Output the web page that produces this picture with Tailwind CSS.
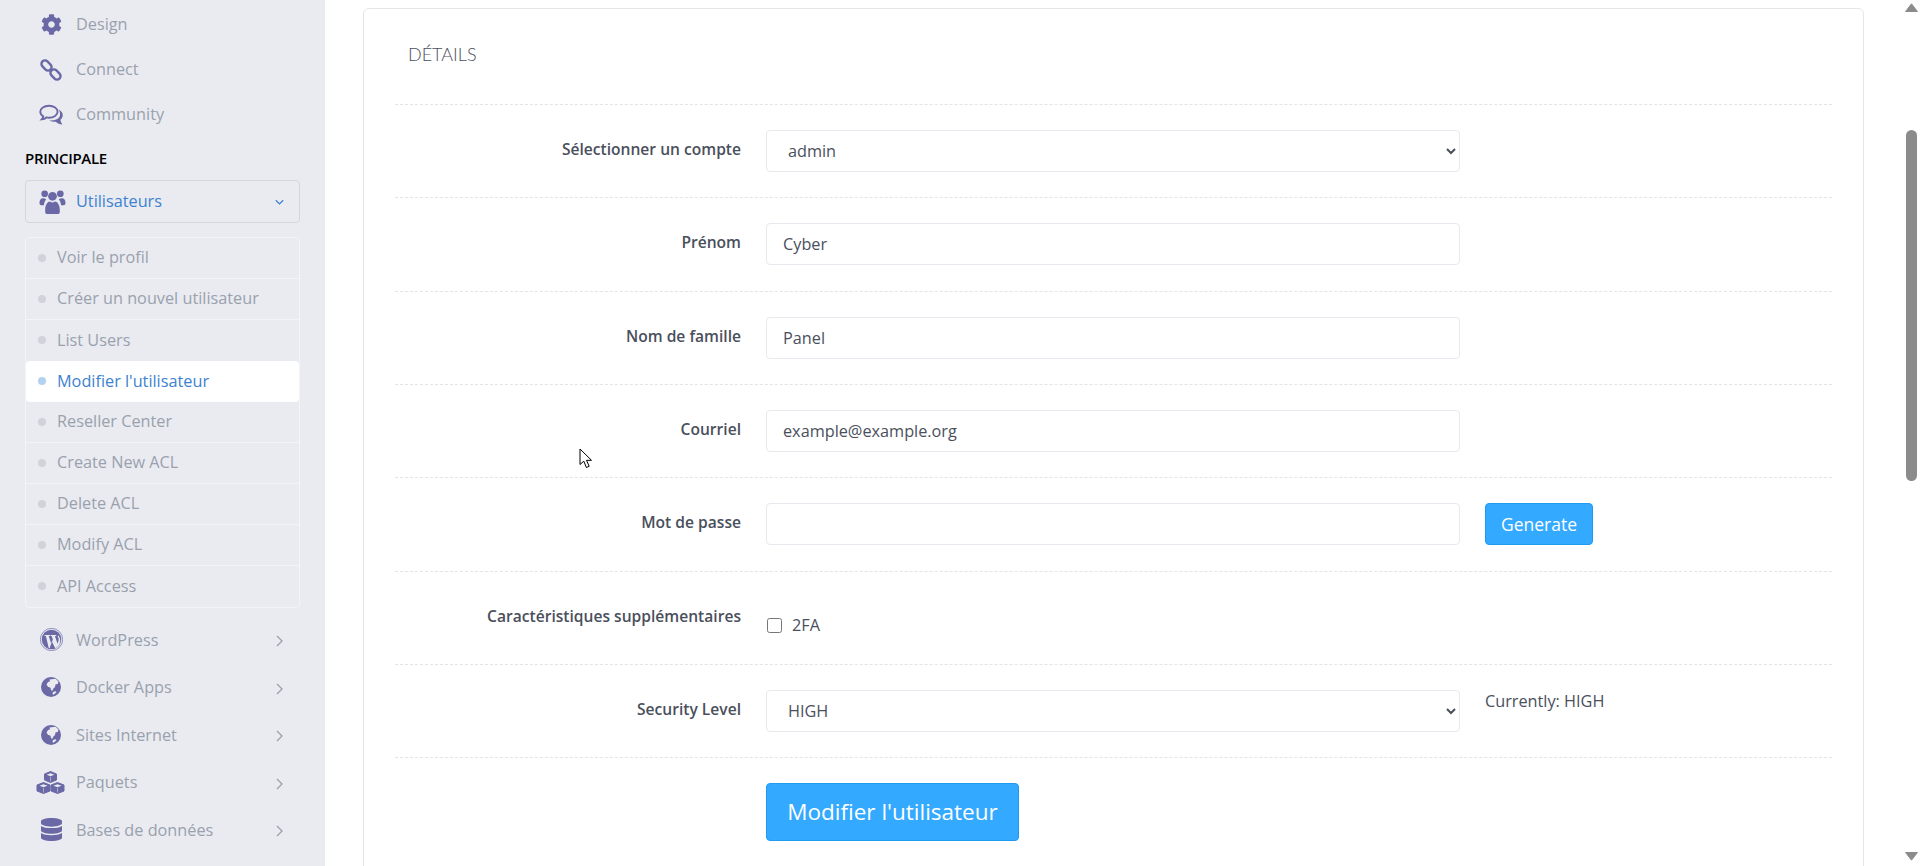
<!DOCTYPE html>
<html lang="fr">
<head>
<meta charset="utf-8">
<title>Modifier l'utilisateur</title>
<script src="https://cdn.jsdelivr.net/npm/@tailwindcss/browser@4"></script>
</head>
<body class="relative flex h-[866px] w-[1920px] overflow-hidden bg-white font-['Open_Sans',sans-serif] text-[#4a4f5c]">

<aside class="h-full w-[325px] shrink-0 overflow-hidden bg-[#e9ebf1] pt-[2px] text-[16.25px] text-[#9aa1ad]">
  <a class="flex h-[45px] items-center">
    <span class="flex w-[76px] justify-center pl-[26px]"><svg class="h-[21px] w-[21px] fill-[#6b68a6]" viewBox="0 0 512 512"><path d="M487.4 315.7l-42.6-24.6c4.3-23.2 4.3-47 0-70.2l42.6-24.6c4.9-2.8 7.1-8.6 5.5-14-11.1-35.6-30-67.8-54.7-94.6-3.8-4.1-10-5.1-14.8-2.3L380.8 110c-17.9-15.4-38.5-27.3-60.8-35.1V25.8c0-5.6-3.9-10.5-9.4-11.7-36.7-8.2-74.3-7.8-109.2 0-5.5 1.2-9.4 6.1-9.4 11.7V75c-22.2 7.9-42.8 19.8-60.8 35.1L88.7 85.5c-4.9-2.8-11-1.9-14.8 2.3-24.7 26.7-43.6 58.9-54.7 94.6-1.7 5.4.6 11.2 5.5 14L67.3 221c-4.3 23.2-4.3 47 0 70.2l-42.6 24.6c-4.9 2.8-7.1 8.6-5.5 14 11.1 35.6 30 67.8 54.7 94.6 3.8 4.1 10 5.1 14.8 2.3l42.6-24.6c17.9 15.4 38.5 27.3 60.8 35.1v49.2c0 5.6 3.9 10.5 9.4 11.7 36.7 8.2 74.3 7.8 109.2 0 5.5-1.2 9.4-6.1 9.4-11.7v-49.2c22.2-7.9 42.8-19.8 60.8-35.1l42.6 24.6c4.9 2.8 11 1.9 14.8-2.3 24.7-26.7 43.6-58.9 54.7-94.6 1.5-5.5-.7-11.3-5.6-14.1zM256 336c-44.1 0-80-35.9-80-80s35.9-80 80-80 80 35.9 80 80-35.9 80-80 80z"/></svg></span>
    <span>Design</span>
  </a>
  <a class="flex h-[45px] items-center">
    <span class="flex w-[76px] justify-center pl-[26px]"><svg class="h-[22px] w-[22px] fill-none stroke-[#6b68a6] stroke-[2.4]" viewBox="0 0 22 22"><rect x="0.8" y="3" width="11.400" height="7" rx="3.500" transform="rotate(45 6.500 6.500)"/><rect x="9.800" y="12" width="11.400" height="7" rx="3.500" transform="rotate(45 15.500 15.500)"/></svg></span>
    <span>Connect</span>
  </a>
  <a class="flex h-[45px] items-center">
    <span class="flex w-[76px] justify-center pl-[26px]"><svg class="h-[21px] w-[24px]" viewBox="0 0 24 21"><path class="fill-[#6b68a6]" d="M19.500 5.500c3 1.500 4.500 3.600 4.200 6.200-.2 1.600-1 2.900-2.300 4 .2 1.600.9 3.200 2 4.800-2.600-.2-4.800-1-6.500-2.800-2.400.3-4.700-.1-6.600-1.200 5 .3 8.600-1 10.300-3.800.9-2.300.6-4.900-1.100-7.200z"/><path class="fill-none stroke-[#6b68a6] stroke-[1.900]" d="M10 1.700c-4.900 0-8.700 2.700-8.700 6 0 1.900 1.200 3.600 3 4.700-.2 1.100-.7 2.100-1.500 3 1.800-.2 3.400-.9 4.700-2 .8.200 1.600.3 2.500.3 4.800 0 8.600-2.700 8.600-6s-3.800-6-8.600-6z"/></svg></span>
    <span>Community</span>
  </a>

  <div class="flex h-[43px] items-center pl-[25px] text-[15px] font-semibold tracking-[-0.3px] text-black">PRINCIPALE</div>

  <a class="mx-[25px] flex h-[43px] items-center rounded border border-[#d3d6de] text-[#3c82d0]">
    <span class="flex w-[50px] justify-center pl-[2px]"><svg class="h-[24px] w-[27px] fill-[#6b68a6]" viewBox="0 0 25 23"><circle cx="12.500" cy="6" r="4.200"/><circle cx="5" cy="3.600" r="3.200"/><circle cx="20" cy="3.600" r="3.200"/><path d="M0 12.500c0-3 1.500-4.500 3.200-4.500 1.700 0 2.500.5 3.300 1-1.200 1.200-2 3-2.200 5.500H1.500C.7 14.500 0 13.700 0 12.500zM25 12.500c0-3-1.500-4.500-3.200-4.500-1.700 0-2.500.5-3.300 1 1.200 1.200 2 3 2.200 5.500h2.800c.8 0 1.500-.8 1.500-2zM5.500 19c0-5 2.500-8 4.500-8 1 .6 1.800 1 2.500 1s1.500-.4 2.500-1c2 0 4.500 3 4.500 8v2c0 1-.8 2-2 2H7.500c-1.200 0-2-1-2-2z"/></svg></span>
    <span class="flex-1">Utilisateurs</span>
    <svg class="mr-[15px] h-[8px] w-[9px] fill-none stroke-[#3c82d0] stroke-[1.300]" viewBox="0 0 9 8"><path d="M.8 2.200l3.700 3.700 3.700-3.700"/></svg>
  </a>

  <ul class="mx-[25px] mt-[13.500px] rounded border border-[#f3f4f8] text-[16.250px]">
    <li class="flex h-[41px] items-center border-b border-[#f3f4f8]"><span class="ml-[12px] mr-[11px] h-[8px] w-[8px] rounded-full bg-[#d0d3da]"></span>Voir le profil</li>
    <li class="flex h-[41px] items-center border-b border-[#f3f4f8]"><span class="ml-[12px] mr-[11px] h-[8px] w-[8px] rounded-full bg-[#d0d3da]"></span>Créer un nouvel utilisateur</li>
    <li class="flex h-[41px] items-center"><span class="ml-[12px] mr-[11px] h-[8px] w-[8px] rounded-full bg-[#d0d3da]"></span>List Users</li>
    <li class="flex h-[41px] items-center rounded-sm bg-white text-[#3c82d0]"><span class="ml-[12px] mr-[11px] h-[8px] w-[8px] rounded-full bg-[#b3d2f0]"></span>Modifier l'utilisateur</li>
    <li class="flex h-[41px] items-center border-b border-[#f3f4f8]"><span class="ml-[12px] mr-[11px] h-[8px] w-[8px] rounded-full bg-[#d0d3da]"></span>Reseller Center</li>
    <li class="flex h-[41px] items-center border-b border-[#f3f4f8]"><span class="ml-[12px] mr-[11px] h-[8px] w-[8px] rounded-full bg-[#d0d3da]"></span>Create New ACL</li>
    <li class="flex h-[41px] items-center border-b border-[#f3f4f8]"><span class="ml-[12px] mr-[11px] h-[8px] w-[8px] rounded-full bg-[#d0d3da]"></span>Delete ACL</li>
    <li class="flex h-[41px] items-center border-b border-[#f3f4f8]"><span class="ml-[12px] mr-[11px] h-[8px] w-[8px] rounded-full bg-[#d0d3da]"></span>Modify ACL</li>
    <li class="flex h-[41px] items-center"><span class="ml-[12px] mr-[11px] h-[8px] w-[8px] rounded-full bg-[#d0d3da]"></span>API Access</li>
  </ul>

  <div class="mt-[8.500px]">
    <a class="flex h-[47.500px] items-center">
      <span class="flex w-[76px] justify-center pl-[26px]"><svg class="h-[23px] w-[23px]" viewBox="0 0 46 46"><circle cx="23" cy="23" r="22.300" class="fill-none stroke-[#6b68a6] stroke-[1.400]"/><circle cx="23" cy="23" r="19.500" class="fill-[#6b68a6]"/><path class="fill-[#e9ebf1]" d="M9 14h11v1.800l-2.600.3 5.300 15.800 3-9-2.300-6.800-2.200-.3V14h11.300v1.800l-2.700.3 5.300 15.600 1.800-5.600c1-3.200.4-5.300-.6-7-.7-1.300-1.200-2.500.2-4.400l-1-.5c2.500 2.500 5 6.500 5 10.600 0 7-4 13-10 15.600L23.800 27l-4.600 13.500-1.600-.1L11.700 16l-2.700-.3z"/></svg></span>
      <span class="flex-1">WordPress</span>
      <svg class="mr-[42px] mt-[3px] h-[12px] w-[7px] fill-none stroke-[#9aa1ad] stroke-[1.300]" viewBox="0 0 7 12"><path d="M1 1l5 5-5 5"/></svg>
    </a>
    <a class="flex h-[47.500px] items-center">
      <span class="flex w-[76px] justify-center pl-[26px]"><svg class="h-[20px] w-[20px]" viewBox="0 0 40 40"><circle cx="20" cy="20" r="20" class="fill-[#6b68a6]"/><path class="fill-[#e9ebf1]" d="M17 5l12-1.500 6 5.500-1.500 5-4.500 1-1 5-4 4-1 3.500-3-1-1-5-5-2-3-4 3-5.500 4-1zM24 30l5-1.500 2 2-6 5-2-1.500z"/></svg></span>
      <span class="flex-1">Docker Apps</span>
      <svg class="mr-[42px] mt-[3px] h-[12px] w-[7px] fill-none stroke-[#9aa1ad] stroke-[1.300]" viewBox="0 0 7 12"><path d="M1 1l5 5-5 5"/></svg>
    </a>
    <a class="flex h-[47.500px] items-center">
      <span class="flex w-[76px] justify-center pl-[26px]"><svg class="h-[20px] w-[20px]" viewBox="0 0 40 40"><circle cx="20" cy="20" r="20" class="fill-[#6b68a6]"/><path class="fill-[#e9ebf1]" d="M17 5l12-1.500 6 5.500-1.500 5-4.500 1-1 5-4 4-1 3.500-3-1-1-5-5-2-3-4 3-5.500 4-1zM24 30l5-1.500 2 2-6 5-2-1.500z"/></svg></span>
      <span class="flex-1">Sites Internet</span>
      <svg class="mr-[42px] mt-[3px] h-[12px] w-[7px] fill-none stroke-[#9aa1ad] stroke-[1.300]" viewBox="0 0 7 12"><path d="M1 1l5 5-5 5"/></svg>
    </a>
    <a class="flex h-[47.500px] items-center">
      <span class="flex w-[76px] justify-center pl-[24px]"><svg class="h-[23px] w-[29px]" viewBox="0 0 58 46"><g class="fill-[#6b68a6] stroke-[#6b68a6] stroke-2"><path d="M29 1l12 5v12l-12 5-12-5V6z"/><path d="M15 23l13 5v12l-13 5-13-5V28z"/><path d="M43 23l13 5v12l-13 5-13-5V28z"/></g><g class="fill-[#e9ebf1]"><path d="M29 4.500l7.500 3-7.500 3-7.500-3z"/><path d="M15 26.500l8 3-8 3-8-3z"/><path d="M43 26.500l8 3-8 3-8-3z"/></g><g class="stroke-[#e9ebf1] stroke-1"><path d="M29 12v9M15 34v9M43 34v9"/></g></svg></span>
      <span class="flex-1">Paquets</span>
      <svg class="mr-[42px] mt-[3px] h-[12px] w-[7px] fill-none stroke-[#9aa1ad] stroke-[1.300]" viewBox="0 0 7 12"><path d="M1 1l5 5-5 5"/></svg>
    </a>
    <a class="flex h-[47.500px] items-center">
      <span class="flex w-[76px] justify-center pl-[26px]"><svg class="h-[23px] w-[21px] fill-[#6b68a6]" viewBox="0 0 448 512" preserveAspectRatio="none"><path d="M448 73.143v45.714C448 159.143 347.667 192 224 192S0 159.143 0 118.857V73.143C0 32.857 100.333 0 224 0s224 32.857 224 73.143zM448 176v102.857C448 319.143 347.667 352 224 352S0 319.143 0 278.857V176c48.125 33.143 136.208 48.572 224 48.572S399.874 209.143 448 176zm0 160v102.857C448 479.143 347.667 512 224 512S0 479.143 0 438.857V336c48.125 33.143 136.208 48.572 224 48.572S399.874 369.143 448 336z"/></svg></span>
      <span class="flex-1">Bases de données</span>
      <svg class="mr-[42px] mt-[3px] h-[12px] w-[7px] fill-none stroke-[#9aa1ad] stroke-[1.300]" viewBox="0 0 7 12"><path d="M1 1l5 5-5 5"/></svg>
    </a>
  </div>
</aside>

<main class="min-w-0 flex-1 pl-[38px] pt-[8px]">
  <section class="h-[900px] w-[1501px] rounded-md border border-[#e4e6ea] px-[31px]">
    <h2 class="flex h-[95px] items-center pb-[5px] pl-[13px] font-['Lato',sans-serif] text-[18px] font-light text-[#4a4f5c]">DÉTAILS</h2>

    <div class="flex h-[93.330px] border-t border-dashed border-[#e2e4e8] pt-[25px] text-[16.250px]">
      <label class="w-[346px] pt-[7px] text-right text-[15.600px] font-semibold leading-[24px]">Sélectionner un compte</label>
      <select class="ml-[25px] h-[42px] w-[694px] rounded border border-[#e6e9ed] bg-white pl-[17px] text-[#4a4f5c]"><option>admin</option></select>
    </div>
    <div class="flex h-[93.330px] border-t border-dashed border-[#e2e4e8] pt-[25px] text-[16.250px]">
      <label class="w-[346px] pt-[7px] text-right text-[15.600px] font-semibold leading-[24px]">Prénom</label>
      <input class="ml-[25px] h-[42px] w-[694px] rounded border border-[#e6e9ed] bg-white px-[16px] text-[#4a4f5c]" value="Cyber">
    </div>
    <div class="flex h-[93.330px] border-t border-dashed border-[#e2e4e8] pt-[25px] text-[16.250px]">
      <label class="w-[346px] pt-[7px] text-right text-[15.600px] font-semibold leading-[24px]">Nom de famille</label>
      <input class="ml-[25px] h-[42px] w-[694px] rounded border border-[#e6e9ed] bg-white px-[16px] text-[#4a4f5c]" value="Panel">
    </div>
    <div class="flex h-[93.330px] border-t border-dashed border-[#e2e4e8] pt-[25px] text-[16.250px]">
      <label class="w-[346px] pt-[7px] text-right text-[15.600px] font-semibold leading-[24px]">Courriel</label>
      <input class="ml-[25px] h-[42px] w-[694px] rounded border border-[#e6e9ed] bg-white px-[16px] text-[#4a4f5c]" value="example@example.org">
    </div>
    <div class="flex h-[93.330px] border-t border-dashed border-[#e2e4e8] pt-[25px] text-[16.250px]">
      <label class="w-[346px] pt-[7px] text-right text-[15.600px] font-semibold leading-[24px]">Mot de passe</label>
      <input class="ml-[25px] h-[42px] w-[694px] rounded border border-[#e6e9ed] bg-white px-[16px]" type="text">
      <button class="ml-[25px] h-[42px] w-[108px] rounded border border-[#1f9bf0] bg-[#33a9ff] text-[17.500px] text-white">Generate</button>
    </div>
    <div class="flex h-[93.330px] border-t border-dashed border-[#e2e4e8] pt-[25px] text-[16.250px]">
      <label class="w-[346px] pt-[7px] text-right text-[15.600px] font-semibold leading-[24px]">Caractéristiques supplémentaires</label>
      <div class="ml-[25px] flex h-[42px] items-center pt-[16px]">
        <input type="checkbox" class="ml-[1px] h-[15px] w-[15px]">
        <span class="ml-[10px]">2FA</span>
      </div>
    </div>
    <div class="flex h-[93.330px] border-t border-dashed border-[#e2e4e8] pt-[25px] text-[16.250px]">
      <label class="w-[346px] pt-[7px] text-right text-[15.600px] font-semibold leading-[24px]">Security Level</label>
      <select class="ml-[25px] h-[42px] w-[694px] rounded border border-[#e6e9ed] bg-white pl-[17px] text-[#4a4f5c]"><option>HIGH</option></select>
      <span class="ml-[25px] leading-[22px]">Currently: HIGH</span>
    </div>
    <div class="flex border-t border-dashed border-[#e2e4e8] pl-[371px] pt-[25px]">
      <button class="h-[58px] w-[253px] rounded border border-[#1f9bf0] bg-[#33a9ff] text-[22.500px] text-white">Modifier l'utilisateur</button>
    </div>
  </section>
</main>

<div class="flex h-full w-[17px] shrink-0 flex-col items-center bg-white">
  <svg class="mt-[3px] h-[9px] w-[13px] fill-[#8b8b8b] stroke-[#8b8b8b] stroke-1" viewBox="0 0 13 9" stroke-linejoin="round"><path d="M6.500 .8L12.400 8.500H.6z"/></svg>
  <div class="mt-[118px] h-[351px] w-[11px] rounded-full bg-[#8b8b8b]"></div>
  <div class="flex-1"></div>
  <svg class="mb-[5px] h-[9px] w-[13px] fill-[#8b8b8b] stroke-[#8b8b8b] stroke-1" viewBox="0 0 13 9" stroke-linejoin="round"><path d="M.6 .5h11.800L6.500 8.200z"/></svg>
</div>

<svg class="absolute left-[579px] top-[448px] h-[21px] w-[14px]" viewBox="0 0 14 21"><path class="fill-white stroke-black stroke-1" d="M1 1v15.500l3.800-3.300 2.600 6.300 2.800-1.200-2.700-6h5z"/></svg>

</body>
</html>
